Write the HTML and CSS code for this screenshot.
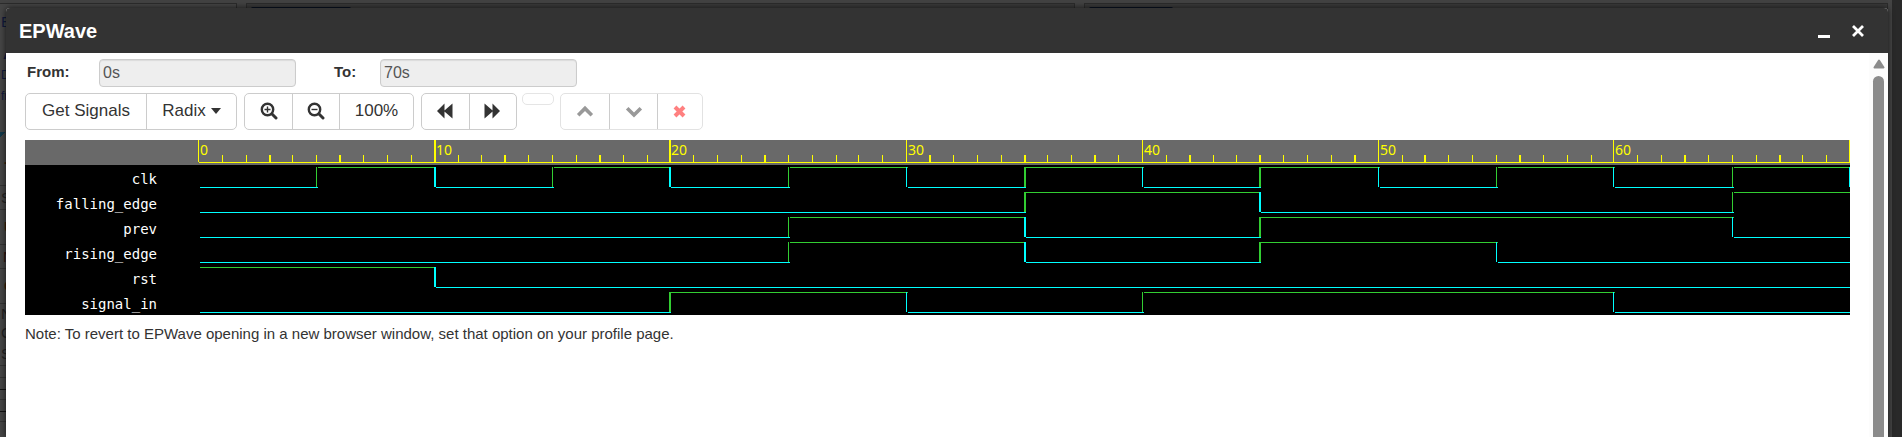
FILE: index.html
```html
<!DOCTYPE html>
<html lang="en">
<head>
<meta charset="utf-8">
<title>EPWave</title>
<link rel="stylesheet" href="styles.css">
</head>
<body>
<div class="backdrop" aria-hidden="true">
  <div class="page">
    <div class="page-bar"></div>
    <div class="page-cols">
      <div class="col col-side"></div>
      <div class="col col-main"><span class="tab"></span></div>
      <div class="col col-last"><span class="tab"></span></div>
    </div>
    <div class="peek">
      <span class="peek-row h36 link">E</span>
      <span class="peek-row h25 link big">A</span>
      <span class="peek-row h18 link small">D</span>
      <span class="peek-row h22 link small">fr</span>
      <span class="peek-row h22"></span>
      <span class="peek-row fold"></span>
      <span class="peek-row h48 rule brown">-</span>
      <span class="peek-row h22 rule">S</span>
      <span class="peek-row h36 rule brown">U</span>
      <span class="peek-row h22 rule maroon">N</span>
      <span class="peek-row h36 rule brown">C</span>
      <span class="peek-row h18">N</span>
      <span class="peek-row h18">C</span>
      <span class="peek-row h22 rule">S</span>
      <span class="peek-row h14 rule"></span>
      <span class="peek-row h14 rule dark"></span>
      <span class="peek-row h9 rule"></span>
      <span class="peek-row h14 rule dark"></span>
      <span class="peek-row h9 rule"></span>
    </div>
  </div>
  <div class="page-edge"></div>
</div>

<main class="dialog" role="dialog" aria-labelledby="title">
  <header class="titlebar">
    <h1 class="title" id="title">EPWave</h1>
    <button class="win-btn" type="button" aria-label="Minimize"><svg class="win-icon" viewBox="0 0 14 14"><path d="M1 12.500H13" stroke-width="3"/></svg></button>
    <button class="win-btn" type="button" aria-label="Close"><svg class="win-icon" viewBox="0 0 14 14"><path d="M2 2L12 12M12 2L2 12" stroke-width="2.800"/></svg></button>
  </header>
  <div class="body">
    <div class="content">
      <form class="range">
        <label class="range-label" for="from">From:</label>
        <input class="range-input" id="from" type="text" value="0s" disabled>
        <label class="range-label" for="to">To:</label>
        <input class="range-input" id="to" type="text" value="70s" disabled>
      </form>
      <div class="toolbar">
        <div class="group">
          <button class="btn btn-wide" type="button">Get Signals</button>
          <button class="btn btn-menu" type="button">Radix<svg class="caret" viewBox="0 0 10 6"><path d="M0 0H10L5 6Z"/></svg></button>
        </div>
        <div class="group">
          <button class="btn" type="button" aria-label="Zoom in"><svg class="icon" viewBox="0 0 18 18"><circle cx="7.500" cy="7.500" r="5.700" class="line"/><path class="line thick" d="M12 12L16 16"/><path class="line thin" d="M4.500 7.500H10.500M7.500 4.500V10.500"/></svg></button>
          <button class="btn" type="button" aria-label="Zoom out"><svg class="icon" viewBox="0 0 18 18"><circle cx="7.500" cy="7.500" r="5.700" class="line"/><path class="line thick" d="M12 12L16 16"/><path class="line thin" d="M4.500 7.500H10.500"/></svg></button>
          <button class="btn btn-percent" type="button">100%</button>
        </div>
        <div class="group">
          <button class="btn" type="button" aria-label="Backward"><svg class="icon" viewBox="0 0 18 18"><path d="M0 9L7.500 1.500V8.500L8 8L15.500 1.500V16.500L8 10L7.500 9.500V16.500Z"/></svg></button>
          <button class="btn" type="button" aria-label="Forward"><svg class="icon" viewBox="0 0 18 18"><path d="M16 9L8.500 1.500V8.500L8 8L0.500 1.500V16.500L8 10L8.500 9.500V16.500Z"/></svg></button>
        </div>
        <button class="btn-blank" type="button" aria-label="Selected signal" disabled></button>
        <div class="group group-off">
          <button class="btn" type="button" aria-label="Move up" disabled><svg class="icon" viewBox="0 0 18 18"><path class="chev" d="M2.200 13.200L9 6.400L15.800 13.200"/></svg></button>
          <button class="btn" type="button" aria-label="Move down" disabled><svg class="icon" viewBox="0 0 18 18"><path class="chev" d="M2.200 6.200L9 13L15.800 6.200"/></svg></button>
          <button class="btn btn-remove" type="button" aria-label="Remove" disabled><svg class="icon" viewBox="0 0 18 18"><path class="cross" d="M4 5L13 14M13 5L4 14"/></svg></button>
        </div>
      </div>
      <section class="wave" aria-label="Waveform">
        <ul class="names">
          <li class="name">clk</li>
          <li class="name">falling_edge</li>
          <li class="name">prev</li>
          <li class="name">rising_edge</li>
          <li class="name">rst</li>
          <li class="name">signal_in</li>
        </ul>
        <div class="plot"><svg class="plot-svg" id="plot"></svg></div>
      </section>
      <p class="note">Note: To revert to EPWave opening in a new browser window, set that option on your profile page.</p>
    </div>
    <div class="scrollbar" aria-hidden="true">
      <svg class="scroll-arrow" viewBox="0 0 12 10"><path d="M6 1.500L10.500 8.500H1.500Z"/></svg>
      <div class="scroll-thumb"></div>
    </div>
  </div>
</main>
<script src="wave.js"></script>
</body>
</html>
```
FILE: styles.css
```css
* { box-sizing: border-box; }

body {
  margin: 0;
  height: 100vh;
  overflow: hidden;
  display: flex;
  background: #292929;
  color: #333;
  font-family: "Liberation Sans", Arial, sans-serif;
  font-size: 15px;
  line-height: 20px;
}

/* dimmed page behind the dialog */
.backdrop { position: absolute; inset: 0; display: flex; }
.page { flex: 1; position: relative; background: #424242; }
.page-edge { width: 4px; margin-right: 10px; background: #444; }
.page-bar { height: 3px; background: #424242; }
.page-cols { display: flex; gap: 9px; }
.col { height: 20px; border: 1px solid #2c2c2c; background: #3a3a3a; padding: 3px 4px; }
.col-side { width: 237px; border-left: 0; background: #454545; }
.col-main { flex: 830; }
.col-last { flex: 804; }
.tab { display: block; width: 100px; height: 3px; border-radius: 2px; background: #0a1222; }
.col-last .tab { width: 84px; }
.peek {
  position: absolute;
  top: 4px;
  bottom: 0;
  left: 0;
  width: 24px;
  background: #454545;
  color: #222;
}
.peek-row { display: flex; align-items: center; padding-left: 1px; }
.h9 { height: 10px; }
.h14 { height: 12px; }
.h18 { height: 19px; }
.h22 { height: 24px; }
.h25 { height: 26px; }
.h36 { height: 35px; }
.h48 { height: 48px; }
.rule { border-bottom: 1px solid #333; }
.rule.dark { border-bottom-color: #111; }
.link { color: #101a3c; }
.small { font-size: 12px; }
.big { font-size: 20px; font-weight: bold; padding-left: 3px; }
.brown { color: #3a1c08; font-weight: bold; padding-left: 4px; }
.maroon { color: #2c1210; padding-left: 3px; }
.fold { width: 6px; height: 6px; background: linear-gradient(135deg, #12384a 50%, #454545 50%); }

/* dialog */
.dialog {
  position: relative;
  flex: 1;
  display: flex;
  flex-direction: column;
  margin: 8px 14px 0 6px;
  background: #fff;
  border-radius: 4px 4px 0 0;
  box-shadow: 0 0 6px rgba(0, 0, 0, .7);
}
.titlebar {
  display: flex;
  align-items: center;
  gap: 20px;
  height: 45px;
  padding: 0 23px 0 13px;
  background: #333;
  border-radius: 4px 4px 0 0;
  color: #fff;
}
.title { flex: 1; margin: 0; font-size: 20px; line-height: 24px; }
.win-btn { display: flex; padding: 0; border: 0; background: none; }
.win-icon { width: 14px; height: 14px; fill: none; stroke: #fff; }

.body { flex: 1; display: flex; min-height: 0; }
.content { flex: 1; min-width: 0; padding: 6px 19px 0; }
.scrollbar {
  width: 19px;
  display: flex;
  flex-direction: column;
  align-items: center;
  gap: 7px;
  padding-top: 6px;
  background: #fcfcfc;
}
.scroll-arrow { width: 12px; height: 10px; fill: #8b8b8b; stroke: #8b8b8b; stroke-width: 2px; stroke-linejoin: round; }
.scroll-thumb { flex: 1; width: 11px; border-radius: 6px 6px 0 0; background: #8b8b8b; }

.range { display: flex; margin: 0 0 6px; padding-left: 2px; }
.range-label { width: 72px; padding-top: 3px; font-weight: bold; }
.range-input + .range-label { width: 46px; margin-left: 38px; }
.range-input {
  width: 197px;
  height: 28px;
  padding: 0 3px;
  border: 1px solid #ccc;
  border-radius: 4px;
  background: #eee;
  box-shadow: inset 0 1px 1px rgba(0, 0, 0, .08);
  color: #555;
  font: 16px/20px "Liberation Sans", Arial, sans-serif;
}

.toolbar { display: flex; align-items: flex-start; gap: 7px; margin-bottom: 10px; }
.group { display: flex; height: 37px; border: 1px solid #ccc; border-radius: 5px; }
.btn {
  display: flex;
  align-items: center;
  justify-content: center;
  width: 47px;
  padding: 0 0 2px;
  border: 0;
  background: none;
  color: #333;
  font: 17px/24px "Liberation Sans", Arial, sans-serif;
}
.btn + .btn { border-left: 1px solid #ccc; }
.btn-wide { width: 120px; }
.btn-menu { width: 90px; gap: 5px; }
.btn-percent { width: 74px; }
.caret { width: 10px; height: 6px; fill: #333; }
.icon { width: 18px; height: 18px; fill: #333; }
.line { fill: none; stroke: #333; stroke-width: 2.4px; }
.thick { stroke-width: 3px; stroke-linecap: round; }
.thin { stroke-width: 1.4px; }
.btn-blank { width: 32px; height: 12px; margin: 0 -1px 0 -2px; padding: 0; border: 1px solid #e5e5e5; border-radius: 5px; background: #fff; }
.group-off { border-color: #e2e2e2; }
.group-off .btn { width: 48px; }
.group-off .btn-remove { width: 45px; }
.chev { fill: none; stroke: #999; stroke-width: 3.6px; }
.cross { fill: none; stroke: #ff8080; stroke-width: 4px; }

.wave {
  display: flex;
  height: 175px;
  background: linear-gradient(#696969 25px, #000 25px);
}
.names { width: 173px; margin: 0; padding: 25px 41px 0 0; list-style: none; }
.name {
  height: 25px;
  color: #fff;
  font: 14px/28px "DejaVu Sans Mono", monospace;
  text-align: right;
}
.plot { flex: 1; min-width: 0; }
.plot-svg { display: block; width: 100%; height: 175px; shape-rendering: crispEdges; }
.axis { fill: #ff0; }
.axis-text { fill: #ff0; font: 14px "Noto Sans", sans-serif; }
.high { fill: #32cd32; }
.low { fill: #0ff; }

.note { margin: 9px 0 0; }
```
FILE: wave.js
```js
var END = 70;
var ROW = 25;

// Each signal: initial level, then the times at which it toggles.
var signals = [
  { level: 0, edges: [5, 10, 15, 20, 25, 30, 35, 40, 45, 50, 55, 60, 65, 70] },
  { level: 0, edges: [35, 45, 65] },
  { level: 0, edges: [25, 35, 45, 65] },
  { level: 0, edges: [25, 35, 45, 55] },
  { level: 1, edges: [10] },
  { level: 0, edges: [20, 30, 40, 60] }
];

var plot = document.getElementById('plot');

function add(tag, cls, attrs) {
  var el = document.createElementNS('http://www.w3.org/2000/svg', tag);
  el.setAttribute('class', cls);
  Object.keys(attrs).forEach(function (key) { el.setAttribute(key, attrs[key]); });
  plot.appendChild(el);
  return el;
}

function rect(cls, x, y, width, height) {
  add('rect', cls, { x: x, y: y, width: width, height: height });
}

function draw() {
  var width = plot.clientWidth;
  // Times snap to a grid of four steps per five pixels.
  function step(t) { return Math.round(t * (width - 0.5) / 1.25 / END); }
  function pos(t) { return Math.min(width - 1, Math.floor(step(t) * 1.25 + 0.5)); }
  function thickness(t) { return step(t) % 4 === 1 ? 2 : 1; }

  plot.textContent = '';
  rect('axis', 1, 22, width - 1, 1);
  for (var t = 0; t <= END; t++) {
    var major = t % 10 === 0;
    rect('axis', pos(t), major ? 0 : 15, thickness(t), major ? 22 : 7);
    if (major && t < END) {
      add('text', 'axis-text', { x: pos(t) + 2, y: 15 }).textContent = t;
    }
  }

  signals.forEach(function (signal, i) {
    var top = ROW * (i + 1) + 2;
    var level = signal.level;
    var from = 0;
    signal.edges.concat(END + 1).forEach(function (edge) {
      var x = pos(from) + 2;
      var end = edge > END ? width : pos(edge) + 2;
      rect(level ? 'high' : 'low', x, level ? top : top + 20, Math.max(0, end - x), 1);
      if (edge <= END) {
        level = 1 - level;
        rect(level ? 'high' : 'low', pos(edge), top, thickness(edge), 20);
      }
      from = edge;
    });
  });
}

draw();
window.addEventListener('resize', draw);
```
